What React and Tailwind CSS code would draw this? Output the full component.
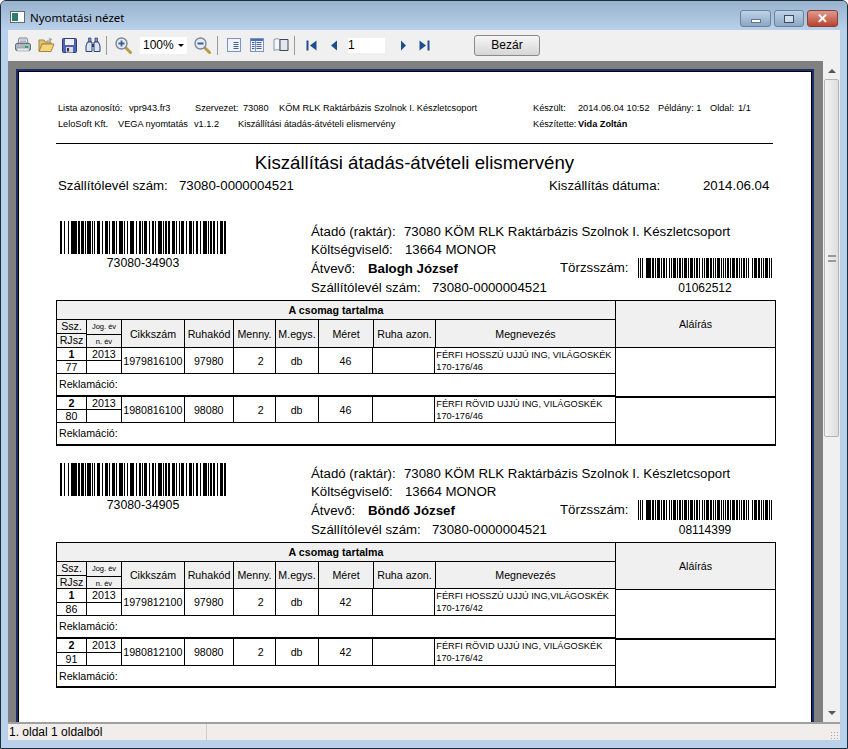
const mainRuns = [2,2,1,3,1,2,6,1,2,1,3,1,1,1,4,1,1,1,1,2,3,2,1,2,3,1,1,2,3,1,1,2,4,1,1,2,1,2,4,2,1,2,2,1,1,1,3,2,1,2,2,1,1,2,4,1,1,1,2,1,2,2,3,1,1,2,1,1,3,2,1,2,3,1,1,2,2,2,1,2,4,1,1,1,2,1,2,2,1,2,3,1,2,2,1,2,1,1,2];
const smallRuns = [1,1,1,1,1,3,5,1,2,1,1,1,3,1,1,1,2,1,1,2,1,1,1,1,3,1,1,1,2,1,1,1,3,1,1,1,3,1,1,1,2,1,1,2,1,1,1,1,3,1,2,1,1,1,1,1,3,1,1,1,1,1,1,1,2,1,1,1,3,1,2,1,1,1,1,1,2,1,1,1,1,3,1,1,3,1,2,1,1,1,1,1,3,1,1,1,2,1,1,1,3,2,1,1,1];

const deliveries = [
  {
    code: "73080-34903",
    name: "Balogh József",
    torzs: "01062512",
    second: false,
    items: [
      { ssz: "1", rj: "77", cikk: "1979816100", ruha: "97980", meret: "46", nev: "FÉRFI HOSSZÚ UJJÚ ING, VILÁGOSKÉK" },
      { ssz: "2", rj: "80", cikk: "1980816100", ruha: "98080", meret: "46", nev: "FÉRFI RÖVID UJJÚ ING, VILÁGOSKÉK" },
    ],
  },
  {
    code: "73080-34905",
    name: "Böndő József",
    torzs: "08114399",
    second: true,
    items: [
      { ssz: "1", rj: "86", cikk: "1979812100", ruha: "97980", meret: "42", nev: "FÉRFI HOSSZÚ UJJÚ ING,VILÁGOSKÉK" },
      { ssz: "2", rj: "91", cikk: "1980812100", ruha: "98080", meret: "42", nev: "FÉRFI RÖVID UJJÚ ING, VILÁGOSKÉK" },
    ],
  },
];

function Barcode({ runs, width, height }) {
  const rects = [];
  let x = 0;
  runs.forEach((w, i) => {
    if (i % 2 === 0 && x < width) rects.push(<rect key={i} x={x} y="0" width={w} height={height} fill="#000" />);
    x += w;
  });
  return (
    <svg width={width} height={height} shapeRendering="crispEdges" className="block">
      {rects}
    </svg>
  );
}

function Tool({ children, className = "" }) {
  return <div className={`flex h-[18px] items-center justify-center ${className}`}>{children}</div>;
}

function Sep({ className = "" }) {
  return <div className={`h-[19px] w-px bg-[#9a9a9a] ${className}`} />;
}

function PrintIcon() {
  return (
    <svg width="16" height="16" viewBox="0 0 16 16">
      <path d="M4 1h8l1 5H3z" fill="#e6eaf0" stroke="#7d8794" />
      <path d="M5 3h6M5 4.5h6" stroke="#aab2bd" />
      <rect x="0.5" y="6.5" width="15" height="7" rx="1.5" fill="#aeb6c2" stroke="#66707e" />
      <rect x="2" y="11" width="12" height="3" fill="#e4e7ec" stroke="#7a8490" strokeWidth="0.5" />
      <rect x="10" y="9" width="3" height="2" fill="#22b04a" />
    </svg>
  );
}

function FolderIcon() {
  return (
    <svg width="17" height="16" viewBox="0 0 17 16">
      <path d="M11 1l3 1.5-3 1.5M14 2.5c-3 0-5 1-6 3" fill="none" stroke="#9ca7b5" />
      <path d="M1 3h5l1 2h6v2H4L1.5 14H1z" fill="#e0c27a" stroke="#a68638" />
      <path d="M4 7h12l-3 7.500H1z" fill="#f4d47e" stroke="#a68638" />
    </svg>
  );
}

function SaveIcon() {
  return (
    <svg width="15" height="15" viewBox="0 0 15 15">
      <rect x="0.5" y="0.5" width="14" height="14" rx="1" fill="#4f63b4" stroke="#2c3b80" />
      <rect x="3" y="1" width="9" height="6" fill="#eef0f6" />
      <rect x="4" y="9" width="7" height="5.500" fill="#d9dbe2" />
      <rect x="5" y="10" width="2" height="3.500" fill="#333" />
    </svg>
  );
}

function BinocularsIcon() {
  return (
    <svg width="16" height="16" viewBox="0 0 16 16">
      <path d="M3.500 1h2.500v4H3.500zM10 1h2.500v4H10z" fill="#7f93bd" stroke="#2b3f70" strokeWidth="0.7" />
      <path d="M2.500 5h4.500v9.500H1V9zM9 5h4.500L15 9v5.500H9z" fill="#dbe4f2" stroke="#2b3f70" />
      <path d="M7 7h2v3H7z" fill="#2b3f70" />
    </svg>
  );
}

function MagnifierIcon({ plus }) {
  return (
    <svg width="17" height="17" viewBox="0 0 17 17">
      <path d="M10.500 10.500l5 5" stroke="#b99a45" strokeWidth="3" strokeLinecap="round" />
      <circle cx="6.500" cy="6.500" r="5.500" fill="#e4edf7" stroke="#7b8795" strokeWidth="1.400" />
      <path d={plus ? "M3.500 6.500h6M6.500 3.500v6" : "M3.500 6.500h6"} stroke="#3d5c96" strokeWidth="1.800" />
    </svg>
  );
}

function PageIcon({ kind }) {
  if (kind === "book") {
    return (
      <svg width="16" height="15" viewBox="0 0 16 15">
        <path d="M1 1.500c2-1 4-1 6 0v11c-2-1-4-1-6 0z" fill="#f3f5f9" stroke="#8994a6" />
        <path d="M7 1.500h8v11H7z" fill="#e3e7ef" stroke="#3e4756" />
      </svg>
    );
  }
  return (
    <svg width="14" height="14" viewBox="0 0 14 14">
      <rect x="0.500" y="0.500" width="13" height="13" fill="#eef2f9" stroke="#7f93bd" />
      {kind === "two" && <rect x="1" y="1" width="12" height="2" fill="#3f72b8" />}
      {kind === "two" && <path d="M5.500 3v10" stroke="#7f93bd" />}
      <path d="M6.500 4.500h5M6.500 6.500h5M6.500 8.500h5M6.500 10.500h5" stroke="#4a5f88" />
      {kind === "two" && <path d="M2 4.500h2.500M2 6.500h2.500M2 8.500h2.500M2 10.500h2.500" stroke="#4a5f88" />}
    </svg>
  );
}

function NavIcon({ dir, edge }) {
  const left = dir === "left";
  return (
    <svg width="11" height="11" viewBox="0 0 11 11">
      {left ? <path d={edge ? "M10.500 0.500v10L4 5.500z" : "M8 0.500v10L2 5.500z"} fill="#1f4e8c" /> : <path d={edge ? "M0.500 0.500v10L7 5.500z" : "M3 0.500v10L8 5.500z"} fill="#1f4e8c" />}
      {edge && <rect x={left ? 0.500 : 8.500} y="0.500" width="2" height="10" fill="#1f4e8c" />}
    </svg>
  );
}

function Toolbar() {
  return (
    <div className="flex h-[31px] shrink-0 items-center bg-[#f0f0f0] pb-px text-black">
      <Tool className="ml-[7px] w-[16px]"><PrintIcon /></Tool>
      <Tool className="ml-[7px] w-[17px]"><FolderIcon /></Tool>
      <Tool className="ml-[7px] w-[15px]"><SaveIcon /></Tool>
      <Tool className="ml-[8px] w-[16px]"><BinocularsIcon /></Tool>
      <Sep className="ml-[5px]" />
      <Tool className="ml-[8px] w-[17px]"><MagnifierIcon plus /></Tool>
      <div className="ml-[8px] flex h-[17px] w-[47px] items-center bg-white pl-[3px] text-[12px]">
        <span className="w-[32px]">100%</span>
        <span className="ml-[3px] h-0 w-0 border-x-[3px] border-t-[3px] border-x-transparent border-t-black" />
      </div>
      <Tool className="ml-[7px] w-[17px]"><MagnifierIcon /></Tool>
      <Sep className="ml-[6px]" />
      <Tool className="ml-[9px] w-[14px]"><PageIcon kind="one" /></Tool>
      <Tool className="ml-[9px] w-[14px]"><PageIcon kind="two" /></Tool>
      <Tool className="ml-[9px] w-[16px]"><PageIcon kind="book" /></Tool>
      <Sep className="ml-[5px]" />
      <Tool className="ml-[11px] w-[11px]"><NavIcon dir="left" edge /></Tool>
      <Tool className="ml-[12px] w-[11px]"><NavIcon dir="left" /></Tool>
      <div className="ml-[8px] flex h-[15px] w-[37px] items-center bg-white text-[12px]">1</div>
      <Tool className="ml-[13px] w-[11px]"><NavIcon dir="right" /></Tool>
      <Tool className="ml-[10px] w-[11px]"><NavIcon dir="right" edge /></Tool>
      <button className="ml-[44px] h-[21px] w-[66px] rounded-[3px] border border-[#8a8a8a] bg-gradient-to-b from-[#f6f6f6] to-[#d6d6d6] text-[12px]">Bezár</button>
    </div>
  );
}

function Cell({ className = "", children }) {
  return <div className={`flex items-center justify-center border-r border-black ${className}`}>{children}</div>;
}

function ItemRow({ item, thick, dataH, splitH }) {
  return (
    <div className={thick ? "border-t-2 border-black" : "border-t border-black"}>
      <div className={`flex ${dataH} border-b border-black text-[10.67px]`}>
        <div className="flex w-[30px] flex-col border-r border-black">
          <div className={`${splitH} border-b border-black text-center font-bold leading-[13px]`}>{item.ssz}</div>
          <div className="text-center leading-[12px]">{item.rj}</div>
        </div>
        <div className="flex w-[35px] flex-col border-r border-black">
          <div className={`${splitH} border-b border-black text-center leading-[13px]`}>2013</div>
        </div>
        <Cell className="w-[63px]">{item.cikk}</Cell>
        <Cell className="w-[49px]">{item.ruha}</Cell>
        <Cell className="w-[42px] justify-end pr-[11px]">2</Cell>
        <Cell className="w-[43px]">db</Cell>
        <Cell className="w-[55px]">{item.meret}</Cell>
        <Cell className="w-[62px]" />
        <div className="w-[180px] pl-[1px] text-[9.2px] leading-[12px]">
          <div className="whitespace-nowrap pt-px">{item.nev}</div>
          <div>170-176/{item.meret}</div>
        </div>
      </div>
      <div className="h-[21px] pl-[2px] text-[10.67px] leading-[21px]">Reklamáció:</div>
    </div>
  );
}

function ItemTable({ d }) {
  const headH = d.second ? "h-[26px]" : "h-[27px]";
  const dataH = d.second ? "h-[27px]" : "h-[26px]";
  const splitH = d.second ? "h-[14px]" : "h-[13px]";
  return (
    <div className="flex h-[146px] w-[720px] border-x border-t border-b-2 border-black">
      <div className="w-[559px] border-r border-black">
        <div className="h-[19px] border-b border-black bg-[#f0f0f0] text-center text-[10.67px] font-bold leading-[18px]">A csomag tartalma</div>
        <div className={`flex ${headH} bg-[#f0f0f0] text-[10.67px]`}>
          <div className="flex w-[30px] flex-col border-r border-black text-center leading-[13px]">
            <div className="h-[15px] border-b border-black">Ssz.</div>
            <div>RJsz</div>
          </div>
          <div className="flex w-[35px] flex-col border-r border-black text-center text-[7.5px] leading-[14px]">
            <div className="h-[15px] border-b border-black">Jog. év</div>
            <div>n. év</div>
          </div>
          <Cell className="w-[63px]">Cikkszám</Cell>
          <Cell className="w-[49px]">Ruhakód</Cell>
          <Cell className="w-[42px]">Menny.</Cell>
          <Cell className="w-[43px]">M.egys.</Cell>
          <Cell className="w-[55px]">Méret</Cell>
          <Cell className="w-[62px]">Ruha azon.</Cell>
          <div className="flex flex-1 items-center justify-center">Megnevezés</div>
        </div>
        {d.items.map((item, i) => (
          <ItemRow key={i} item={item} thick={i === 1} dataH={dataH} splitH={splitH} />
        ))}
      </div>
      <div className="flex-1">
        <div className="h-[47px] border-b border-black bg-[#f0f0f0] pt-[16px] text-center text-[10.67px] leading-[14px]">Aláírás</div>
        <div className="h-[48px]" />
        <div className="h-[48px] border-t-2 border-black" />
      </div>
    </div>
  );
}

function Delivery({ d }) {
  return (
    <div>
      <div className="flex h-[79px]">
        <div className="w-[255px] pl-[4px]">
          <Barcode runs={mainRuns} width={166} height={33} />
          <div className="w-[166px] text-center text-[12.3px] leading-[18px]">{d.code}</div>
        </div>
        <div className="w-[465px] pt-[2px] text-[13.25px] leading-[18px]">
          <div className="flex h-[18px] whitespace-nowrap">
            <span className="w-[93px]">Átadó (raktár):</span>
            <span>73080 KÖM RLK Raktárbázis Szolnok I. Készletcsoport</span>
          </div>
          <div className="flex h-[18px] whitespace-nowrap">
            <span className="w-[94px]">Költségviselő:</span>
            <span>13664 MONOR</span>
          </div>
          <div className="flex">
            <div className="w-[249px] whitespace-nowrap pt-px">
              <div className="flex h-[19px]">
                <span className="w-[57px]">Átvevő:</span>
                <span className="font-bold">{d.name}</span>
              </div>
              <div className="flex h-[18px]">
                <span className="w-[121px]">Szállítólevél szám:</span>
                <span>73080-0000004521</span>
              </div>
            </div>
            <div className="-mt-px">
              <div className="flex">
                <span className="w-[78px] pt-px">Törzsszám:</span>
                <Barcode runs={smallRuns} width={134} height={20} />
              </div>
              <div className="ml-[78px] mt-[2px] w-[134px] text-center text-[12px] leading-[16px]">{d.torzs}</div>
            </div>
          </div>
        </div>
      </div>
      <ItemTable d={d} />
    </div>
  );
}

function Page() {
  return (
    <div className="h-full w-[798px] border-x-2 border-t-2 border-[#1c2f6b] bg-black px-px pt-px">
      <div className="h-full bg-white pl-[37px] pt-[28px] text-black">
        <div className="flex h-[16px] whitespace-nowrap text-[9.2px] leading-[16px]">
          <span className="ml-[2px] w-[71px]">Lista azonosító:</span>
          <span className="w-[66px]">vpr943.fr3</span>
          <span className="w-[48px]">Szervezet:</span>
          <span className="w-[36px]">73080</span>
          <span className="w-[254px]">KÖM RLK Raktárbázis Szolnok I. Készletcsoport</span>
          <span className="w-[45px]">Készült:</span>
          <span className="w-[80px]">2014.06.04 10:52</span>
          <span className="w-[52px]">Példány: 1</span>
          <span className="w-[28px]">Oldal:</span>
          <span>1/1</span>
        </div>
        <div className="flex h-[16px] whitespace-nowrap text-[9.2px] leading-[16px]">
          <span className="ml-[2px] w-[60px]">LeloSoft Kft.</span>
          <span className="w-[76px]">VEGA nyomtatás</span>
          <span className="w-[44px]">v1.1.2</span>
          <span className="w-[295px]">Kiszállítási átadás-átvételi elismervény</span>
          <span className="w-[45px]">Készítette:</span>
          <span className="font-bold">Vida Zoltán</span>
        </div>
        <div className="mt-[11px] h-px w-[717px] bg-black" />
        <div className="mt-[7px] h-[24px] w-[717px] text-center text-[18.67px] leading-[24px]">Kiszállítási átadás-átvételi elismervény</div>
        <div className="mt-[3px] flex h-[16px] whitespace-nowrap text-[13.25px] leading-[16px]">
          <span className="ml-[2px] w-[121px]">Szállítólevél szám:</span>
          <span className="w-[370px]">73080-0000004521</span>
          <span className="w-[154px]">Kiszállítás dátuma:</span>
          <span>2014.06.04</span>
        </div>
        <div className="mt-[27px] flex flex-col gap-[17px]">
          {deliveries.map((d) => (
            <Delivery key={d.code} d={d} />
          ))}
        </div>
      </div>
    </div>
  );
}

function Scrollbar() {
  return (
    <div className="flex w-[17px] shrink-0 flex-col items-center bg-[#f0f0f0]">
      <div className="flex h-[17px] items-center pt-[2px]">
        <span className="h-0 w-0 border-x-4 border-b-4 border-x-transparent border-b-[#555]" />
      </div>
      <div className="mt-px flex h-[358px] w-[15px] items-center justify-center rounded-[2px] border border-[#b4b4b4] bg-gradient-to-r from-[#f4f4f4] to-[#dedede]">
        <div className="h-[7px] w-[8px] border-y-2 border-[#999]" />
      </div>
      <div className="mt-auto flex h-[17px] items-center pb-[2px]">
        <span className="h-0 w-0 border-x-4 border-t-4 border-x-transparent border-t-[#555]" />
      </div>
    </div>
  );
}

function WinButton({ className = "", children }) {
  return (
    <div className={`flex h-[17px] items-center justify-center rounded-[3px] border ${className}`}>
      {children}
    </div>
  );
}

export default function App() {
  return (
    <div className="flex h-[749px] w-[848px] flex-col overflow-hidden rounded-t-[6px] border border-[#1d2c3a] bg-[#b9d1ea] font-['Liberation_Sans',Arial,sans-serif]">
      {/* Title bar */}
      <div className="flex h-[29px] shrink-0 items-start bg-gradient-to-b from-[#98b2cd] to-[#b9d1ea] pl-[9px]">
        <div className="mt-[10px] flex h-[12px] w-[15px] items-center border border-[#5d6a72] bg-white pl-px">
          <div className="h-[8px] w-[6px] bg-[#2f7d6e]" />
        </div>
        <div className="ml-[5px] mt-[9px] font-['Noto_Sans',sans-serif] text-[11.5px] leading-[16px] text-black">Nyomtatási nézet</div>
        <div className="ml-auto mr-[9px] mt-[9px] flex gap-[3px]">
          <WinButton className="w-[31px] border-[#6d8199] bg-gradient-to-b from-[#bed3e8] to-[#8ba7c4]">
            <div className="mt-[5px] h-[4px] w-[10px] border border-[#6a7480] bg-white" />
          </WinButton>
          <WinButton className="w-[30px] border-[#6d8199] bg-gradient-to-b from-[#bed3e8] to-[#8ba7c4]">
            <div className="h-[8px] w-[10px] border-[1.5px] border-[#3c4a5c] bg-white/50" />
          </WinButton>
          <WinButton className="w-[31px] border-[#8a4036] bg-gradient-to-b from-[#dc9a90] to-[#b9402e]">
            <span className="text-[13px] font-bold leading-none text-white">✕</span>
          </WinButton>
        </div>
      </div>

      {/* Client area */}
      <div className="mx-[7px] mb-[8px] flex min-h-0 flex-1 flex-col">
        <Toolbar />
        <div className="flex min-h-0 flex-1">
          <div className="min-w-0 flex-1 overflow-hidden bg-[#808080] pl-[8px] pt-[8px]">
            <Page />
          </div>
          <Scrollbar />
        </div>
        <div className="flex h-[18px] shrink-0 items-center border-t-2 border-[#a0a0a0] bg-[#f0edeb] text-[12px] text-black">
          <div className="flex h-full w-[199px] items-center border-r border-[#d0cdca] pl-px">1. oldal 1 oldalból</div>
          <div className="ml-auto mr-px mt-[6px] h-[9px] w-[9px] bg-[radial-gradient(#aaa_1px,transparent_1px)] bg-[length:3px_3px]" />
        </div>
      </div>
    </div>
  );
}
